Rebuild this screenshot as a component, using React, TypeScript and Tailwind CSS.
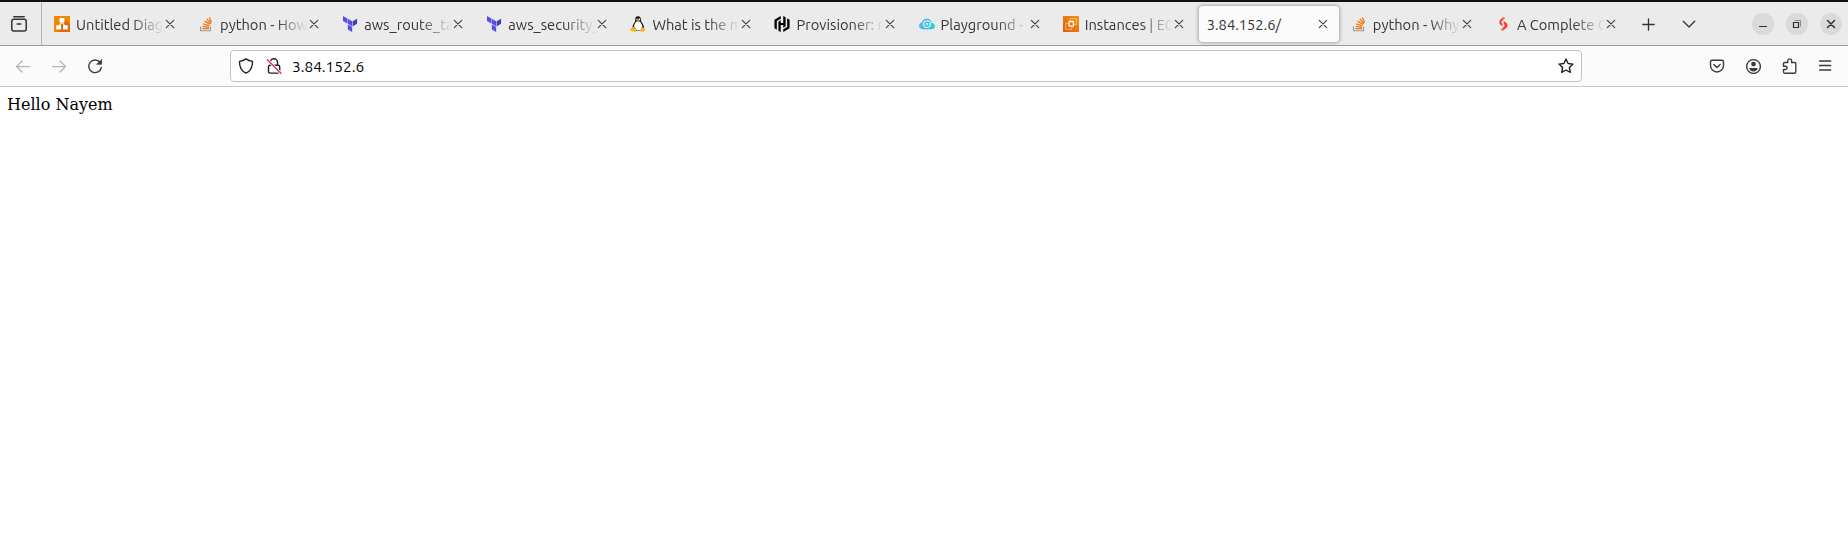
import React from "react";
import type { ReactNode } from "react";
import { SiHashicorp } from "react-icons/si";

type IconProps = { children: ReactNode; className?: string; size?: number };

const Line = ({ children, className = "", size = 16 }: IconProps) => (
  <svg
    width={size}
    height={size}
    viewBox={`0 0 ${size} ${size}`}
    fill="none"
    stroke="currentColor"
    strokeWidth="1.25"
    strokeLinecap="round"
    strokeLinejoin="round"
    className={`shrink-0 ${className}`}
  >
    {children}
  </svg>
);

const DiagramIcon = () => (
  <svg width="16" height="16" viewBox="0 0 16 16">
    <path fill="#f08705" d="M0 0h16v16H0z" />
    <path fill="#df6c0c" d="M10.500 2.500L16 8v8H5.500L2.500 13.500z" />
    <path d="M8 5L5 11M8 5l3 6" stroke="#fff" strokeWidth="1.3" />
    <rect x="5.500" y="2" width="5" height="4.300" rx=".5" fill="#fff" />
    <rect x="2.200" y="9.300" width="4.800" height="4.300" rx=".5" fill="#fff" />
    <rect x="9" y="9.300" width="4.800" height="4.300" rx=".5" fill="#fff" />
  </svg>
);

const StackIcon = () => (
  <svg width="16" height="16" viewBox="0 0 16 16" fill="none">
    <path d="M2.500 10.500v4.300h10v-4.300" stroke="#96999d" strokeWidth="1.100" />
    <path
      d="M4.400 12.700h6.600M4.500 10.400l6.500.9M5.200 7.800l6.200 2M6.700 5.100l5.400 3.300M8.900 2.900l4 4.600M11.400 1.300l2 5.200"
      stroke="#f5760f"
      strokeWidth="1.250"
    />
  </svg>
);

const TerraformIcon = () => (
  <svg width="16" height="16" viewBox="0 0 24 24">
    <path
      fill="#5c4ee5"
      d="M1.440 0v7.575l6.561 3.790V3.787zM8.720 4.230v7.575l6.561 3.787V8.018zm0 8.405v7.575L15.280 24v-7.578z"
    />
    <path fill="#4040b2" d="M22.560 4.227l-6.561 3.791v7.574l6.560-3.787z" />
  </svg>
);

const TuxIcon = () => (
  <svg width="16" height="16" viewBox="0 0 16 16">
    <path
      fill="#0b0b0b"
      d="M8 .2C6 .2 5.200 1.500 5.300 3.200c.1 2-.5 2.600-1.500 4.300C2.900 9 2.400 10.500 2.500 12L6 15h5l3-3c0-1.800-.7-3.500-1.700-5-1-1.400-1.500-2-1.500-3.800C10.800 1.300 9.800.2 8 .2z"
    />
    <path
      fill="#fff"
      d="M6.300 5.500C5 7.200 4 9 4 10.700l3 3.800h4l1.400-3.300c0-2-1-3.800-2.400-5.700z"
    />
    <circle cx="7" cy="3.200" r=".75" fill="#fff" />
    <circle cx="9.200" cy="3.200" r=".85" fill="#fff" />
    <path fill="#f5b90f" d="M6.300 4.700L8 3.900l2 .8L8 6z" />
    <path
      fill="#f7b80c"
      d="M3.200 10.500L6.600 14c.5 1-.4 1.900-1.500 1.700L.8 14.800c-.7-.3-.2-1.200-.2-2 0-.9 1.600-.7 2.600-2.300zM11 11.300c.8 1.200 2 1 2.500-.1.600 1.500 1.300 1.600 2 2.200.6.600-.4 1.100-2.200 2.200-1.300.8-2.500.2-2.500-1z"
    />
  </svg>
);

const PlaygroundIcon = () => (
  <svg width="16" height="16" viewBox="0 0 16 16">
    <defs>
      <linearGradient id="cloud" x1="0" y1="0" x2="1" y2="0">
        <stop offset="0" stopColor="#5bbfe8" />
        <stop offset=".5" stopColor="#2fb0e4" />
        <stop offset="1" stopColor="#2bdcd8" />
      </linearGradient>
    </defs>
    <path
      fill="url(#cloud)"
      d="M3.800 13.300C1.500 13.300 0 11.700 0 9.800 0 8 1.200 6.800 2.800 6.600 3.400 4.200 5.300 2.700 7.900 2.700c2.700 0 4.500 1.700 4.900 4.300 1.800.1 3.200 1.300 3.200 3s-1.400 3.300-3.300 3.300z"
    />
    <circle cx="8" cy="8.100" r="3.400" fill="none" stroke="#f2fcff" strokeWidth="1.100" />
    <circle cx="8" cy="8.100" r="1.500" fill="#fff" />
    <path d="M8 7.400v1.400" stroke="#2fb0e4" strokeWidth=".9" />
  </svg>
);

const InstancesIcon = () => (
  <svg width="16" height="16" viewBox="0 0 16 16">
    <defs>
      <linearGradient id="compute" x1="0" y1="1" x2="1" y2="0">
        <stop offset="0" stopColor="#d8600c" />
        <stop offset="1" stopColor="#f99210" />
      </linearGradient>
    </defs>
    <path fill="url(#compute)" d="M0 0h16v16H0z" />
    <g fill="none" stroke="#fff" strokeWidth=".8">
      <rect x="6" y="5.500" width="4.500" height="4.700" rx=".4" strokeWidth="1.300" />
      <path d="M5.200 7.500H2.700v5.800h6.100v-2.500M7.200 4.800V2.700h6.100v5.800H11" strokeOpacity=".55" />
    </g>
  </svg>
);

const GuideIcon = () => (
  <svg width="16" height="16" viewBox="0 0 16 16">
    <path
      fill="#ff3a2d"
      d="M8.400 .8L5.300 3.800c-1.500 1.600-1.400 3.600.1 5l2 1.600V7.800C6.100 6.600 6.100 5.800 7 5l1.400-1.200zM7.500 15l3.900-3.200c1.500-1.500 1.400-3.400 0-4.700L8.700 4.900v2.900c1.200 1 1.200 2 .2 2.900l-1.400 1.300z"
    />
    <path fill="#ff6a4d" d="M8.400 .8v3l1.900-1.600zM7.500 15v-2.800L5.300 13.500z" />
  </svg>
);

type TabInfo = { icon: ReactNode; title: string };

const tabs: TabInfo[] = [
  { icon: <DiagramIcon />, title: "Untitled Diag" },
  { icon: <StackIcon />, title: "python - How" },
  { icon: <TerraformIcon />, title: "aws_route_ta" },
  { icon: <TerraformIcon />, title: "aws_security_" },
  { icon: <TuxIcon />, title: "What is the m" },
  { icon: <SiHashicorp size={16} color="#000" />, title: "Provisioner: r" },
  { icon: <PlaygroundIcon />, title: "Playground -" },
  { icon: <InstancesIcon />, title: "Instances | EC" },
  { icon: null, title: "3.84.152.6/" },
  { icon: <StackIcon />, title: "python - Why" },
  { icon: <GuideIcon />, title: "A Complete G" },
];

const CloseMark = () => (
  <Line className="text-[#3f3f3f]">
    <path d="M4.300 4.300l7.400 7.400M11.700 4.300l-7.400 7.400" strokeWidth="1.150" />
  </Line>
);

const Tab = ({ icon, title }: TabInfo) =>
  icon ? (
    <div className="flex w-[144.1px] shrink-0 items-center pl-2">
      <span className="flex w-[22px] shrink-0">{icon}</span>
      <span className="w-[88px] whitespace-nowrap pt-0.5 leading-5 [mask-image:linear-gradient(to_left,transparent,black_32px)]">
        {title}
      </span>
      <span className="-ml-0.5">
        <CloseMark />
      </span>
    </div>
  ) : (
    <div className="flex w-[144.1px] shrink-0 items-center">
      <div className="flex h-9 w-[140px] items-center justify-between rounded bg-[#fbfbfb] pl-2 pr-2 shadow-[0_0_4px_rgba(0,0,0,0.45)]">
        <span className="pt-0.5 leading-5">{title}</span>
        <CloseMark />
      </div>
    </div>
  );

const WindowButton = ({ children }: { children: ReactNode }) => (
  <div className="flex size-[22px] items-center justify-center rounded-full bg-[#dadada] text-[#303030]">
    {children}
  </div>
);

export default function App() {
  return (
    <div className="flex h-[534px] w-[1848px] flex-col overflow-hidden bg-white">
      <div className="flex h-[46px] shrink-0 border-b border-t-2 border-b-[#9d9d9f] border-t-[#111] bg-[#ebebeb] font-['Ubuntu','Noto_Sans',sans-serif] text-[14.667px] text-[#333]">
        <div className="flex w-[42px] items-center justify-center border-r border-[#b4b4b4] pr-[3px]">
          <Line>
            <path d="M2.800.7h10.400" strokeWidth="1.400" />
            <rect x=".8" y="3.300" width="14.400" height="11.700" rx="2" strokeWidth="1.500" />
            <path d="M6.200 8h3.600" strokeWidth="1.500" />
          </Line>
        </div>
        <div className="flex pl-1">
          {tabs.map((tab, i) => (
            <Tab key={i} {...tab} />
          ))}
        </div>
        <div className="flex items-center gap-6 pl-[9px]">
          <Line>
            <path d="M8.500 2.800v11.400M2.800 8.500h11.400" strokeWidth="1.300" />
          </Line>
          <Line>
            <path d="M3.300 5.300L9 11l5.700-5.700" strokeWidth="1.300" />
          </Line>
        </div>
        <div className="ml-auto flex items-center gap-3 pr-[6px]">
          <WindowButton>
            <Line>
              <path d="M4 10.500h8" strokeLinecap="butt" strokeWidth="1" />
            </Line>
          </WindowButton>
          <WindowButton>
            <Line>
              <path d="M6 4.500h5.500V10" strokeWidth="1" stroke="#8a8a8a" />
              <path d="M4.500 6.500h5v5h-5z" strokeWidth="1.200" strokeLinejoin="miter" />
            </Line>
          </WindowButton>
          <WindowButton>
            <Line>
              <path d="M4.500 4.500l7 7M11.500 4.500l-7 7" strokeWidth="1.500" />
            </Line>
          </WindowButton>
        </div>
      </div>

      <div className="flex h-[41px] shrink-0 items-center border-b border-[#c8c8c9] bg-[#fbfbfb] text-[#3b3b3d]">
        <div className="flex w-[230px] items-center gap-5 pl-[15px]">
          <Line className="text-[#b4b4b4]">
            <path d="M14.500 8.500H1.500M7 3L1.500 8.500 7 14" />
          </Line>
          <Line className="text-[#b4b4b4]">
            <path d="M1.500 8.500h13M9 3l5.500 5.500L9 14" />
          </Line>
          <Line>
            <path d="M13 4.300A6.300 6.300 0 1 0 14.300 9.500" strokeWidth="1.400" />
            <path d="M14.600 1.700v4.600H10z" fill="currentColor" strokeWidth=".7" />
          </Line>
        </div>
        <div className="flex h-8 w-[1352px] items-center rounded border border-[#c1c1c2] bg-white px-[7px] text-[#202023]">
          <Line>
            <path
              d="M8 .9c1.900 1.300 4 2.100 6.500 2.500.2 5.200-1.500 9.500-6.500 11.800C3 12.900 1.300 8.600 1.500 3.400 4 3 6.100 2.200 8 .9z"
              strokeWidth="1.400"
            />
          </Line>
          <Line className="ml-3">
            <path
              d="M4.300 7.200V4.400a3.600 3.600 0 0 1 7.200 0v2.800M4.300 7.200h7.900c1 0 1.500.5 1.500 1.500v4.900c0 1-.5 1.500-1.500 1.500H4c-1 0-1.500-.5-1.500-1.500V8.700c0-1 .5-1.500 1.800-1.500z"
              strokeWidth="1.400"
            />
            <path d="M1.300 1.700l13.600 13.600" stroke="#fff" strokeWidth="3" />
            <path d="M1.300 1.700l13.600 13.600" stroke="#e22850" strokeWidth="1.300" />
          </Line>
          <span className="ml-[10px] pt-px font-['Ubuntu','Noto_Sans',sans-serif] text-[15.4px] leading-5 text-black">
            3.84.152.6
          </span>
          <Line className="ml-auto">
            <path
              d="M8 1l2.100 4.500 4.900.6-3.600 3.400.9 4.900L8 12l-4.300 2.400.9-4.900L1 6.100l4.900-.6z"
              strokeWidth="1.400"
            />
          </Line>
        </div>
        <div className="ml-auto flex items-center gap-5 pr-[15px]">
          <Line>
            <path
              d="M3 2.200h10c1 0 1.500.5 1.500 1.500V7.500a6.500 6.500 0 0 1-13 0V3.700c0-1 .5-1.500 1.500-1.500z"
              strokeWidth="1.400"
            />
            <path d="M4.900 6.500L8 9.500l3.100-3" strokeWidth="1.400" />
          </Line>
          <Line>
            <circle cx="8.500" cy="8.500" r="6.900" strokeWidth="1.400" />
            <circle cx="8.500" cy="6.100" r="2.400" fill="currentColor" stroke="none" />
            <path d="M4.200 9.900h8.600c-.4 2.200-2.100 3.500-4.300 3.500s-3.900-1.300-4.300-3.500z" fill="currentColor" stroke="none" />
          </Line>
          <Line>
            <path
              d="M6.800 4.500V2.700a1.900 1.900 0 0 1 3.800 0v1.800h3.100c.7 0 1.100.4 1.100 1.100v8.500c0 .7-.4 1.100-1.100 1.100H3.600c-.7 0-1.100-.4-1.100-1.100v-2.600h2a1.650 1.650 0 0 0 0-3.300h-2V5.600c0-.7.4-1.100 1.100-1.100z"
              strokeWidth="1.350"
            />
          </Line>
          <Line>
            <path d="M2.500 3h11.200M2.500 7.500h11.200M2.500 12h11.200" strokeWidth="1.300" />
          </Line>
        </div>
      </div>

      <main className="flex-1 bg-white py-2 pl-[7px] font-['DejaVu_Serif',serif] text-[16px] leading-[19px] text-black">
        Hello Nayem
      </main>
    </div>
  );
}
